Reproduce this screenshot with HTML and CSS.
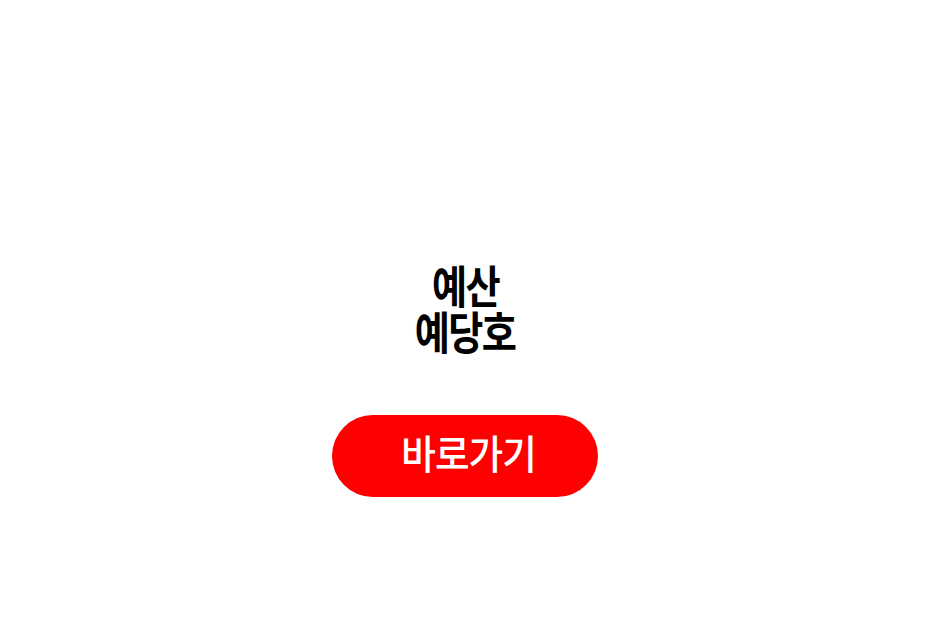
FILE: index.html
```html
<!DOCTYPE html>
<html lang="ko">
<head>
    <meta charset="UTF-8">
    <title>예당호</title>
    <link rel="stylesheet" href="styles.css">
</head>
<body>
<div class="page">
    <h1 class="title">
        <span>예산</span>
        <span>예당호</span>
    </h1>
    <a class="go_button" href="#"><span>바로가기</span></a>
</div>
</body>
</html>
```

FILE: styles.css
```css
body {
    margin: 0;
    padding: 0;
    background: #ffffff;
    font-family: "Noto Sans CJK KR", "Noto Sans", sans-serif;
}
.page {
    display: flex;
    flex-direction: column;
    align-items: center;
    padding-top: 262px;
}
.title {
    display: flex;
    flex-direction: column;
    align-items: center;
    margin: 0;
    font-size: 45px;
    line-height: 46px;
    font-weight: 700;
    color: #000000;
    letter-spacing: -2px;
}
.title span {
    display: block;
    transform: scaleX(0.85);
}
.go_button {
    display: flex;
    align-items: center;
    justify-content: center;
    box-sizing: border-box;
    margin-top: 61px;
    padding: 0 0 8px 7px;
    width: 266px;
    height: 82px;
    border-radius: 41px;
    background-color: #ff0000;
    color: #ffffff;
    text-decoration: none;
    font-size: 40px;
    line-height: 40px;
    font-weight: 500;
    letter-spacing: -1px;
}
.go_button span {
    display: block;
    transform: scaleX(0.94);
}
```
